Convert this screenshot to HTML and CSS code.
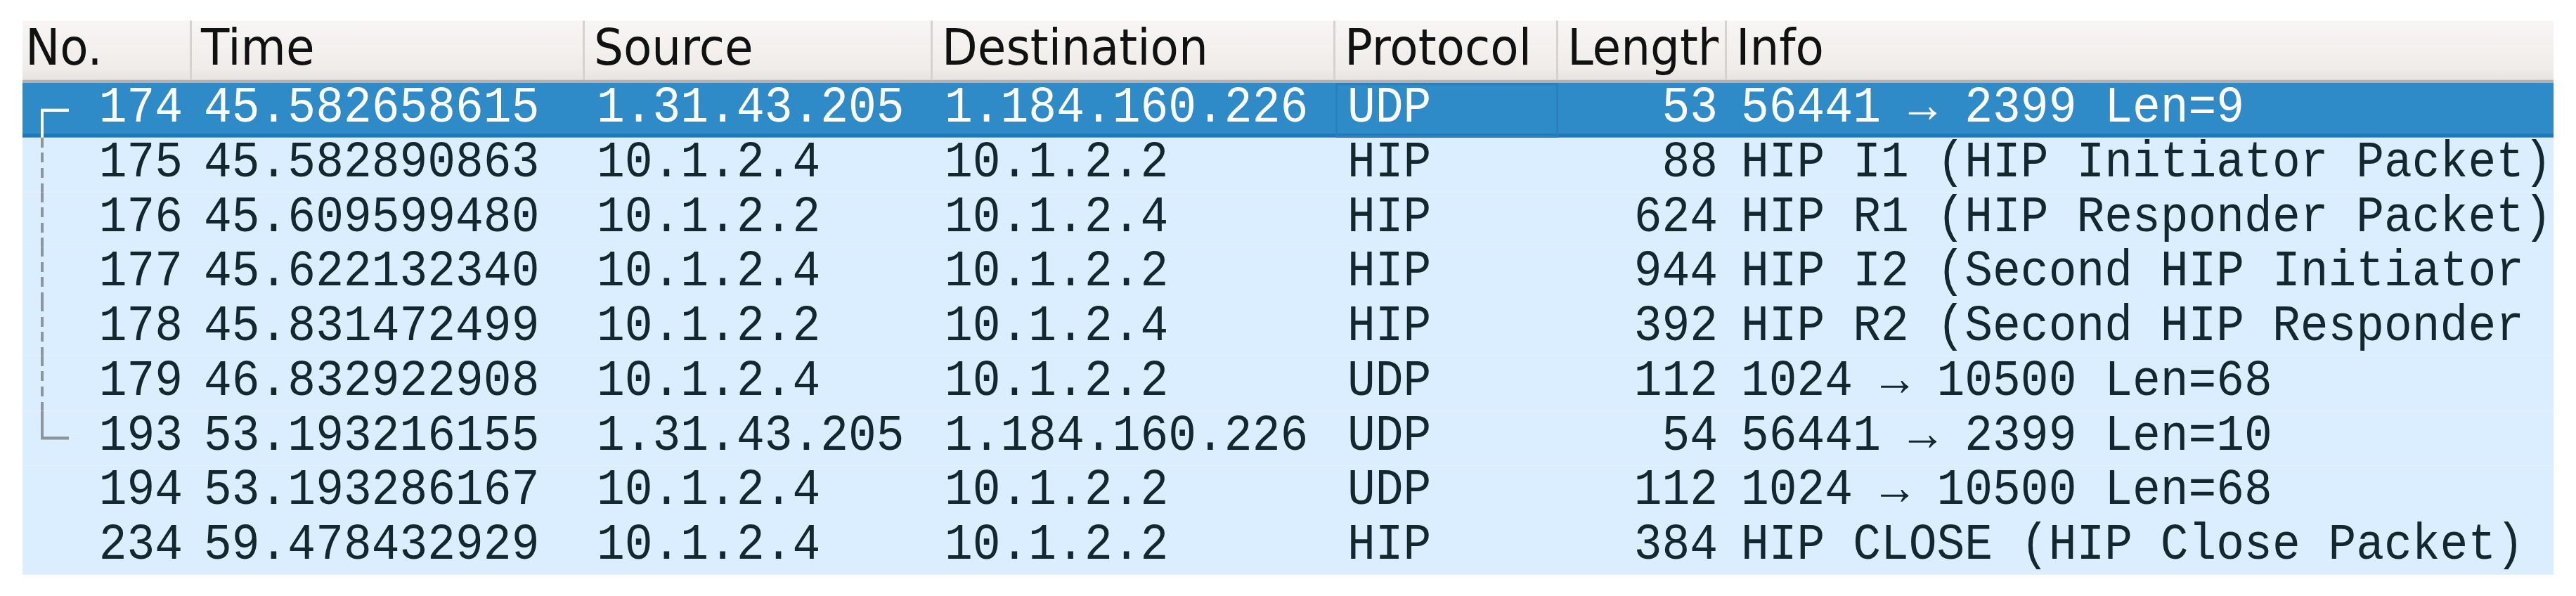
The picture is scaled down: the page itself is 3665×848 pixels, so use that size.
FILE: index.html
```html
<!DOCTYPE html>
<html lang="en">
<head>
<meta charset="utf-8">
<title>Packet list</title>
<link rel="stylesheet" href="styles.css">
</head>
<body>
<div class="packet-list">
  <div class="header">
    <div class="hcell c-no"><span class="label">No.</span></div>
    <div class="hcell"><span class="label">Time</span></div>
    <div class="hcell"><span class="label">Source</span></div>
    <div class="hcell"><span class="label">Destination</span></div>
    <div class="hcell"><span class="label">Protocol</span></div>
    <div class="hcell"><span class="label clipped">Length</span></div>
    <div class="hcell"><span class="label">Info</span></div>
  </div>
  <div class="rows">
    <div class="row selected">
      <div class="cell c-no"><span class="rel rel-first"></span>174</div>
      <div class="cell">45.582658615</div>
      <div class="cell">1.31.43.205</div>
      <div class="cell">1.184.160.226</div>
      <div class="cell focus">UDP</div>
      <div class="cell num">53</div>
      <div class="cell info">56441 → 2399 Len=9</div>
    </div>
    <div class="row">
      <div class="cell c-no"><span class="rel rel-mid"></span>175</div>
      <div class="cell">45.582890863</div>
      <div class="cell">10.1.2.4</div>
      <div class="cell">10.1.2.2</div>
      <div class="cell">HIP</div>
      <div class="cell num">88</div>
      <div class="cell info">HIP I1 (HIP Initiator Packet)</div>
    </div>
    <div class="row">
      <div class="cell c-no"><span class="rel rel-mid"></span>176</div>
      <div class="cell">45.609599480</div>
      <div class="cell">10.1.2.2</div>
      <div class="cell">10.1.2.4</div>
      <div class="cell">HIP</div>
      <div class="cell num">624</div>
      <div class="cell info">HIP R1 (HIP Responder Packet)</div>
    </div>
    <div class="row">
      <div class="cell c-no"><span class="rel rel-mid"></span>177</div>
      <div class="cell">45.622132340</div>
      <div class="cell">10.1.2.4</div>
      <div class="cell">10.1.2.2</div>
      <div class="cell">HIP</div>
      <div class="cell num">944</div>
      <div class="cell info">HIP I2 (Second HIP Initiator Packet)</div>
    </div>
    <div class="row">
      <div class="cell c-no"><span class="rel rel-mid"></span>178</div>
      <div class="cell">45.831472499</div>
      <div class="cell">10.1.2.2</div>
      <div class="cell">10.1.2.4</div>
      <div class="cell">HIP</div>
      <div class="cell num">392</div>
      <div class="cell info">HIP R2 (Second HIP Responder Packet)</div>
    </div>
    <div class="row">
      <div class="cell c-no"><span class="rel rel-mid"></span>179</div>
      <div class="cell">46.832922908</div>
      <div class="cell">10.1.2.4</div>
      <div class="cell">10.1.2.2</div>
      <div class="cell">UDP</div>
      <div class="cell num">112</div>
      <div class="cell info">1024 → 10500 Len=68</div>
    </div>
    <div class="row">
      <div class="cell c-no"><span class="rel rel-last"></span>193</div>
      <div class="cell">53.193216155</div>
      <div class="cell">1.31.43.205</div>
      <div class="cell">1.184.160.226</div>
      <div class="cell">UDP</div>
      <div class="cell num">54</div>
      <div class="cell info">56441 → 2399 Len=10</div>
    </div>
    <div class="row">
      <div class="cell c-no">194</div>
      <div class="cell">53.193286167</div>
      <div class="cell">10.1.2.4</div>
      <div class="cell">10.1.2.2</div>
      <div class="cell">UDP</div>
      <div class="cell num">112</div>
      <div class="cell info">1024 → 10500 Len=68</div>
    </div>
    <div class="row">
      <div class="cell c-no">234</div>
      <div class="cell">59.478432929</div>
      <div class="cell">10.1.2.4</div>
      <div class="cell">10.1.2.2</div>
      <div class="cell">HIP</div>
      <div class="cell num">384</div>
      <div class="cell info">HIP CLOSE (HIP Close Packet)</div>
    </div>
  </div>
</div>
</body>
</html>
```
FILE: styles.css
```css
html, body {
  margin: 0;
  background: #ffffff;
}

body {
  box-sizing: border-box;
  min-height: 848px;
  padding: 23.6px 0 0 32px;
}

.packet-list {
  width: 3601px;
  padding-top: 5px;
  margin-bottom: 60px;
  overflow-x: clip;
  overflow-y: visible;
  transform: scaleY(1.08);
  transform-origin: 0 0;
}

.header,
.row {
  display: grid;
  grid-template-columns: 241px 559px 495px 573px 317px 240px 1176px;
  grid-template-rows: 100%;
}

.header {
  height: 81.5px;
  box-sizing: border-box;
  background: linear-gradient(#f8f6f4, #efece9 80%, #e6e3e0);
  border-bottom: 4px solid #b8b0a9;
  font-family: "DejaVu Sans", sans-serif;
  font-size: 66px;
  color: #111111;
}

.hcell {
  box-sizing: border-box;
  display: flex;
  align-items: center;
  min-width: 0;
  min-height: 0;
  padding: 0 9px 6px 13px;
  border-right: 3px solid #d6d2ce;
}

.hcell:last-child {
  border-right: none;
}

.hcell.c-no {
  padding-left: 4px;
}

.label {
  min-width: 0;
  line-height: normal;
  white-space: nowrap;
}

.label.clipped {
  overflow-x: clip;
  overflow-y: visible;
}

.row {
  height: 72px;
  background: #daeeff;
  color: #12272e;
  font-family: "Liberation Mono", monospace;
  font-size: 66.3px;
}

.row.selected {
  background: #2f8bc7;
  color: #ffffff;
  box-shadow: inset 0 -5px 0 #2078b8;
}

.cell {
  box-sizing: border-box;
  display: flex;
  align-items: center;
  min-width: 0;
  min-height: 0;
  padding: 0 13px 4px 17px;
  line-height: normal;
  white-space: nowrap;
}

.cell.info {
  padding-left: 20px;
  padding-right: 0;
}

.cell.num,
.cell.c-no {
  justify-content: flex-end;
}

.row.selected .focus {
  box-shadow: inset 0 0 0 3px #2a80bd;
}

.rel {
  flex: none;
  align-self: stretch;
  width: 40px;
  margin: 0 auto -4px 9px;
  color: #8c959c;
}

.row.selected .rel {
  color: #ffffff;
}

.rel-first {
  background:
    linear-gradient(currentColor, currentColor) 0 50% / 100% 4px no-repeat,
    linear-gradient(currentColor, currentColor) 0 100% / 4px 50% no-repeat;
}

.rel-mid {
  background: repeating-linear-gradient(to bottom, currentColor 0 13px, transparent 13px 20px) 0 0 / 4px 100% no-repeat;
}

.rel-last {
  background:
    linear-gradient(currentColor, currentColor) 0 50% / 100% 4px no-repeat,
    linear-gradient(currentColor, currentColor) 0 0 / 4px 50% no-repeat;
}
```
